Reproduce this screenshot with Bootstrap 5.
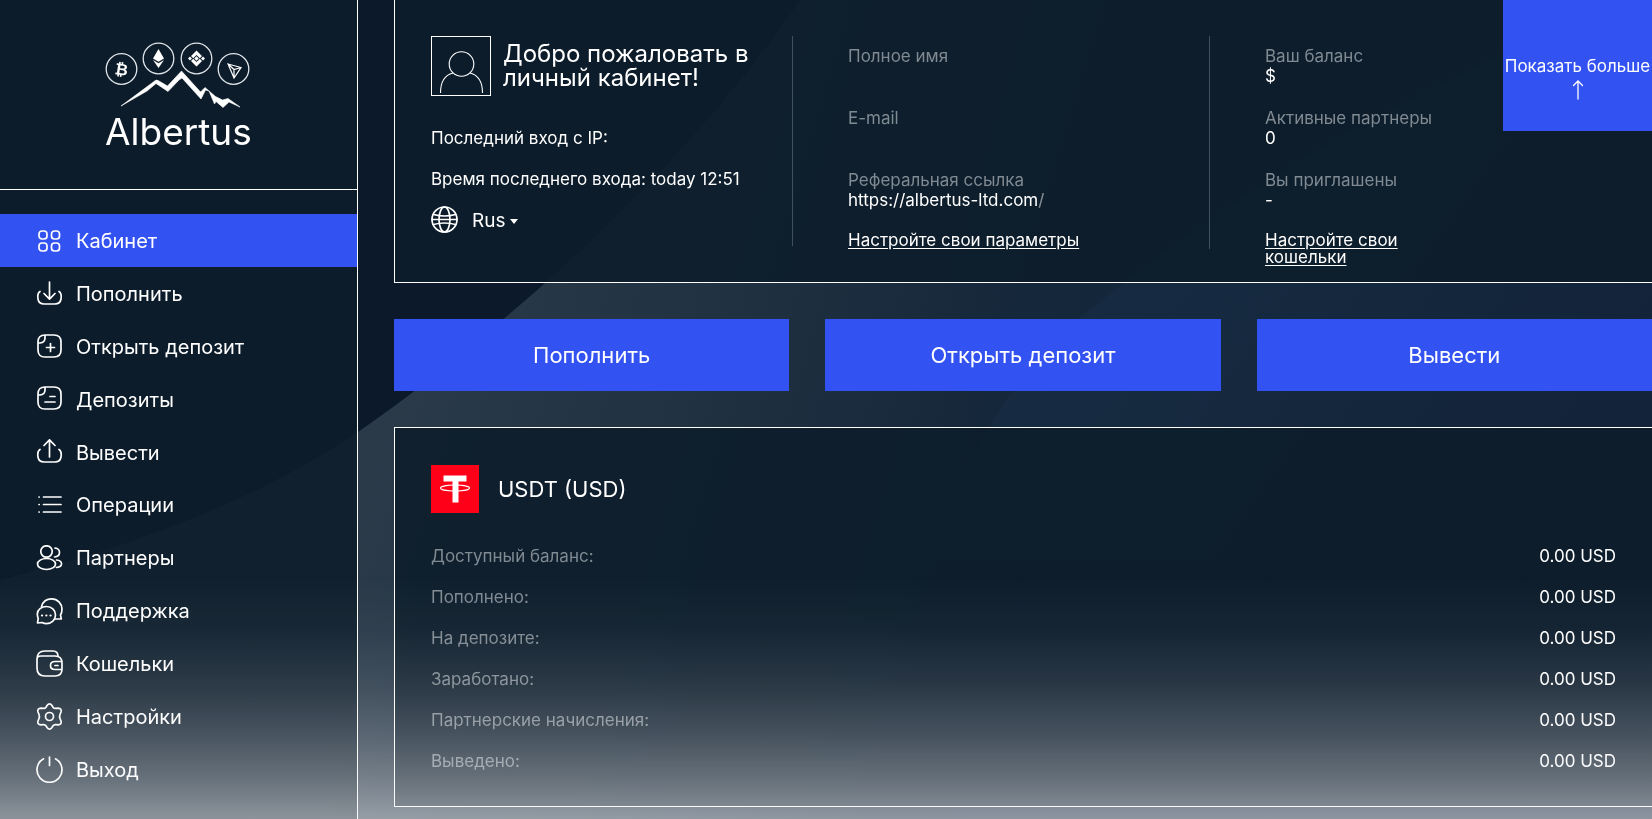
<!DOCTYPE html>
<html lang="ru">
<head>
<meta charset="utf-8">
<meta name="viewport" content="width=device-width, initial-scale=1">
<title>Albertus</title>
<link href="https://cdn.jsdelivr.net/npm/bootstrap@5.3.0/dist/css/bootstrap.min.css" rel="stylesheet">
<style>
:root { --accent: #3352f2; --panel: rgba(12, 29, 42, .88); --soft: #808a92; }
body { font-family: Inter, "Liberation Sans", sans-serif; font-size: 17px; line-height: 20px; color: #fff; background: #0b192b; overflow-x: hidden; }
.backdrop { position: fixed; inset: 0; width: 100%; height: 100%; z-index: -1; }
.fog { position: fixed; inset: 0; z-index: 5; pointer-events: none;
  background: linear-gradient(rgba(245,245,248,0) 70%, rgba(245,245,248,.04) 77%, rgba(245,245,248,.13) 84%, rgba(245,245,248,.25) 90%, rgba(245,245,248,.38) 95%, rgba(245,245,248,.54)); }
.sidebar { width: 358px; background: var(--panel); border-right: 1px solid #fff; }
.brand { height: 190px; border-bottom: 1px solid #fff; }
.side-nav { padding: 24px 0; }
.side-nav .nav-item { flex: 1 1 48px; }
.side-nav .nav-link { height: 100%; padding: 2px 36px 0; gap: 13px; font-size: 20px; color: #fff; border-radius: 0; }
.side-nav .nav-link.active { background: var(--accent); }
.ico { width: 27px; height: 27px; flex: none; fill: none; stroke: #fff; stroke-width: 1.7; stroke-linecap: round; stroke-linejoin: round; }
.content { margin-left: 36px; min-width: 0; }
.panel { background: var(--panel); border: 1px solid #fff; border-right: 0; padding-left: 36px; }
.panel-top { border-top: 0; padding-top: 36px; padding-bottom: 16px; margin-bottom: 36px; display: grid; grid-template-columns: 362fr 417fr 442fr; align-items: start; }
.profile, .details { min-height: 210px; border-right: 1px solid #42505b; }
.avatar { width: 60px; height: 60px; border: 1px solid #fff; flex: none; }
.welcome { font-size: 24px; line-height: 24px; margin: 0; font-weight: 400; }
.profile p { margin: 0 0 21px; }
.profile .head { gap: 12px; margin-bottom: 32px; }
.lang { gap: 14px; margin-top: -4px; }
.lang select { appearance: none; border: 0; color: #fff; font-size: 19px; padding: 2px 12px 0 0; background: url("data:image/svg+xml,%3Csvg xmlns='http://www.w3.org/2000/svg' width='8' height='5'%3E%3Cpath d='M0 0h8L4 5z' fill='white'/%3E%3C/svg%3E") no-repeat right 60%; }
.lang select option { color: #000; }
.details, .balance { padding: 10px 0 0 55px; }
.balance { max-width: 240px; }
.details dl, .balance dl { margin: 0; }
.details dt, .balance dt, .sums th { color: var(--soft); font-weight: 400; }
.details dd, .balance dd { margin: 0 0 22px; min-height: 20px; }
.panel a { color: #fff; line-height: 17px; display: block; text-underline-offset: 2px; }
.more { position: absolute; top: 0; right: 0; width: 149px; height: 131px; padding: 24px 0 0; background: var(--accent); color: #fff; border: 0; font-size: 17px; line-height: 20px; }
.actions { display: grid; grid-template-columns: repeat(3, minmax(0, 1fr)); gap: 36px; margin-bottom: 36px; }
.actions .btn { height: 72px; border: 0; border-radius: 0; background: var(--accent); color: #fff; font-size: 22px; }
.wallet { padding-top: 37px; padding-bottom: 25px; margin-bottom: 12px; }
.wallet .head { gap: 19px; margin-bottom: 22px; font-size: 22px; }
.sums { width: 100%; }
.sums tr { height: 41px; }
.sums th { padding: 0; }
.sums td { text-align: right; padding: 0 36px 0 0; }
</style>
</head>
<body>
<svg class="backdrop" viewBox="0 0 1652 819" preserveAspectRatio="none" aria-hidden="true">
  <defs>
    <linearGradient id="wave" gradientUnits="userSpaceOnUse" x1="420" y1="300" x2="1150" y2="520">
      <stop offset="0" stop-color="#2a3a49"/><stop offset=".35" stop-color="#213242"/><stop offset=".75" stop-color="#15273a"/><stop offset="1" stop-color="#14263c"/>
    </linearGradient>
    <linearGradient id="glow" gradientUnits="userSpaceOnUse" x1="1100" y1="280" x2="1500" y2="560">
      <stop offset="0" stop-color="#172e45"/><stop offset="1" stop-color="#122238"/>
    </linearGradient>
  </defs>
  <path fill="url(#wave)" d="M800 0C740 90 640 200 545 283C490 332 420 390 358 432C250 505 120 550 0 580V819H1652V0Z"/>
  <path fill="url(#glow)" d="M1652 0C1450 60 1250 180 1080 318C1030 360 960 450 930 560H1652Z" opacity=".6"/>
</svg>

<svg class="d-none" aria-hidden="true">
  <symbol id="i-grid" viewBox="0 0 27 27"><rect x="3" y="3" width="8" height="8" rx="3"/><rect x="15.500" y="3" width="8" height="8" rx="3"/><rect x="3" y="15" width="8" height="8" rx="3"/><rect x="15.500" y="15" width="8" height="8" rx="3"/></symbol>
  <symbol id="i-down" viewBox="0 0 27 27"><path d="M13.500 1v17M8 12.500l5.500 5.700 5.500-5.700M4 10.500c-2.500 1.500-2.500 4.500-2 7.500.6 3.800 2.300 5 6 5h11c3.700 0 5.400-1.200 6-5 .5-3 .5-6-2-7.500"/></symbol>
  <symbol id="i-up" viewBox="0 0 27 27"><path d="M13.500 18V1M8 6.500L13.500.800 19 6.500M4 10.500c-2.500 1.500-2.500 4.500-2 7.500.6 3.800 2.300 5 6 5h11c3.700 0 5.400-1.200 6-5 .5-3 .5-6-2-7.500"/></symbol>
  <symbol id="i-open" viewBox="0 0 27 27"><path d="M9 1h9q7 0 7 7v8q0 7-7 7H9q-7 0-7-7V8q0-7 7-7ZM2 9h2q5-.5 5-5V1M14.500 9.500v8M10.500 13.500h8"/></symbol>
  <symbol id="i-list-doc" viewBox="0 0 27 27"><path d="M9 1h9q7 0 7 7v8q0 7-7 7H9q-7 0-7-7V8q0-7 7-7ZM2 9h2q5-.5 5-5V1M14 10.500h5M9 16h10"/></symbol>
  <symbol id="i-ops" viewBox="0 0 27 27"><path d="M7.500 5H25M7.500 12.500H25M7.500 20H25M3 5h.2M3 12.500h.2M3 20h.2"/></symbol>
  <symbol id="i-users" viewBox="0 0 27 27"><circle cx="10.500" cy="6.500" r="5.700"/><ellipse cx="10.500" cy="19" rx="9" ry="5.500"/><path d="M19 3q4.500.500 4.500 4.500t-5 4.500M20.500 15q5 .5 5 3.700t-5 3.800"/></symbol>
  <symbol id="i-chat" viewBox="0 0 27 27"><path d="M5.500 8.500C7 3.500 11 .900 15.500.900 22 .900 26 6 26 11c0 3-.8 5-1.500 6l.8 4h-6"/><path d="M10.500 8.500c5 0 9 3.500 9 8.500s-4 8.700-9 8.700c-2 0-3-.4-4.500-1.200l-4.500.5.700-4.500C1.500 18.500 1.300 17.500 1.300 16c0-4.500 4.200-7.500 9.200-7.500Z"/><path stroke-width="2.200" d="M6 17.500h.1M10.300 17.500h.1M14.500 17.500h.1"/></symbol>
  <symbol id="i-wallet" viewBox="0 0 27 27"><path d="M1 9v9q0 8 8 8h10q7 0 7-7v-6q0-7-7-7H5Q1 6 1 9Q1 1 9 1h8q5 0 5 5.500M26 11.500h-7q-4.500 0-4.500 4t4.500 4h7M19 15.500h3"/></symbol>
  <symbol id="i-gear" viewBox="0 0 27 27"><circle cx="13.500" cy="13.500" r="4"/><path d="M11 2.500Q13.500-.800 16 2.500L17 4.200Q18 5.600 20 5.400L22 5.200Q26 5.400 25 9L24 11.500Q23.200 13.500 24 15.500L25 18Q26 21.600 22 21.800L20 21.600Q18 21.400 17 22.800L16 24.500Q13.500 27.800 11 24.500L10 22.800Q9 21.400 7 21.600L5 21.800Q1 21.600 2 18L3 15.500Q3.800 13.500 3 11.500L2 9Q1 5.400 5 5.200L7 5.400Q9 5.600 10 4.200Z"/></symbol>
  <symbol id="i-power" viewBox="0 0 27 27"><path d="M13.500 1v8.500M7.500 2.800A12.500 12.500 0 1 0 19.500 2.800"/></symbol>
  <symbol id="i-globe" viewBox="0 0 27 27"><circle cx="13.500" cy="13.500" r="12.500"/><ellipse cx="13.500" cy="13.500" rx="5.500" ry="12.500"/><path d="M2.500 8.500Q13.500 11.500 24.500 8.500M2.500 18.500Q13.500 15.500 24.500 18.500M1 13.500h25"/></symbol>
</svg>

<div class="d-flex min-vh-100">
  <aside class="sidebar d-flex flex-column flex-shrink-0">
    <div class="brand text-center">
      <svg width="160" height="190" viewBox="99 0 160 190" role="img" aria-label="Albertus">
        <g fill="none" stroke="#dfe5ea" stroke-width="1.300"><circle cx="121.500" cy="69" r="15.300"/><circle cx="158.500" cy="58.500" r="15.300"/><circle cx="196.500" cy="58.500" r="15.300"/><circle cx="233.500" cy="69" r="15.300"/></g>
        <g fill="#fff">
          <text x="121.500" y="75" font-size="16" font-weight="700" text-anchor="middle" font-family="DejaVu Sans, sans-serif" transform="rotate(8 121.500 69)">₿</text>
          <path d="M158.500 49l5.500 9.500-5.500 3.200-5.500-3.200ZM153 60l5.500 3.300 5.500-3.300-5.500 8Z"/>
          <path d="M196.500 50.500l5.500 5.500-2.200 2.200-3.300-3.300-3.300 3.300L191 56ZM196.500 66.500l5.500-5.500-2.200-2.200-3.300 3.300-3.300-3.300L191 61ZM196.500 56.200l2.300 2.300-2.300 2.300-2.300-2.300ZM190 56.500l2 2-2 2-2-2ZM203 56.500l2 2-2 2-2-2Z"/>
          <path d="M121 106L154 81.500Q156.500 79 159 81L167.500 86 181.500 71 200.500 92 205 87.500 215.500 96.500 222.500 100 228 98.500 240 107 229 102 223 107.500 216 101.500 214.500 104 209 91 205.500 90 201 99 182 78 179 80 168 91.500 156 83.500 147 91Z" stroke="#fff" stroke-width=".600"/>
        </g>
        <path d="M228 64l13 3.500-7 10.500ZM228 64l6 5.500 7-2M234 69.500V78" fill="none" stroke="#fff" stroke-width="1.200"/>
        <text x="105" y="145" font-size="37" fill="#fff">Albertus</text>
      </svg>
    </div>
    <ul class="side-nav nav flex-column flex-nowrap flex-grow-1">
      <li class="nav-item"><a class="nav-link active d-flex align-items-center" href="#"><svg class="ico"><use href="#i-grid"/></svg>Кабинет</a></li>
      <li class="nav-item"><a class="nav-link d-flex align-items-center" href="#"><svg class="ico"><use href="#i-down"/></svg>Пополнить</a></li>
      <li class="nav-item"><a class="nav-link d-flex align-items-center" href="#"><svg class="ico"><use href="#i-open"/></svg>Открыть депозит</a></li>
      <li class="nav-item"><a class="nav-link d-flex align-items-center" href="#"><svg class="ico"><use href="#i-list-doc"/></svg>Депозиты</a></li>
      <li class="nav-item"><a class="nav-link d-flex align-items-center" href="#"><svg class="ico"><use href="#i-up"/></svg>Вывести</a></li>
      <li class="nav-item"><a class="nav-link d-flex align-items-center" href="#"><svg class="ico"><use href="#i-ops"/></svg>Операции</a></li>
      <li class="nav-item"><a class="nav-link d-flex align-items-center" href="#"><svg class="ico"><use href="#i-users"/></svg>Партнеры</a></li>
      <li class="nav-item"><a class="nav-link d-flex align-items-center" href="#"><svg class="ico"><use href="#i-chat"/></svg>Поддержка</a></li>
      <li class="nav-item"><a class="nav-link d-flex align-items-center" href="#"><svg class="ico"><use href="#i-wallet"/></svg>Кошельки</a></li>
      <li class="nav-item"><a class="nav-link d-flex align-items-center" href="#"><svg class="ico"><use href="#i-gear"/></svg>Настройки</a></li>
      <li class="nav-item"><a class="nav-link d-flex align-items-center" href="#"><svg class="ico"><use href="#i-power"/></svg>Выход</a></li>
    </ul>
  </aside>

  <main class="content flex-grow-1">
    <section class="panel panel-top position-relative">
      <div class="profile">
        <div class="head d-flex align-items-center">
          <svg class="avatar" viewBox="0 0 58 58" fill="none" stroke="#fff" stroke-width="1.100" aria-hidden="true"><circle cx="29.500" cy="27" r="12.300"/><path d="M8.500 56C8.500 45 13 38 21 36M38 36C46 38 50.500 45 50.500 56"/></svg>
          <h1 class="welcome">Добро пожаловать в личный кабинет!</h1>
        </div>
        <p>Последний вход с IP:</p>
        <p>Время последнего входа: today 12:51</p>
        <div class="lang d-flex align-items-center">
          <svg class="ico" aria-hidden="true"><use href="#i-globe"/></svg>
          <select aria-label="Язык"><option>Rus</option></select>
        </div>
      </div>
      <div class="details">
        <dl>
          <dt>Полное имя</dt><dd></dd>
          <dt>E-mail</dt><dd></dd>
          <dt>Реферальная ссылка</dt><dd>https://albertus-ltd.com<span class="opacity-50">/</span></dd>
        </dl>
        <a href="#">Настройте свои параметры</a>
      </div>
      <div class="balance">
        <dl>
          <dt>Ваш баланс</dt><dd>$</dd>
          <dt>Активные партнеры</dt><dd>0</dd>
          <dt>Вы приглашены</dt><dd>-</dd>
        </dl>
        <a href="#">Настройте свои кошельки</a>
      </div>
      <button class="more" type="button">Показать больше
        <svg class="d-block mx-auto mt-1" width="12" height="20" viewBox="0 0 12 20" fill="none" stroke="#fff" stroke-width="1.300" stroke-linecap="round" aria-hidden="true"><path d="M6 19V1.500M1.500 5.500L6 1l4.500 4.500"/></svg>
      </button>
    </section>

    <div class="actions">
      <button class="btn" type="button">Пополнить</button>
      <button class="btn" type="button">Открыть депозит</button>
      <button class="btn" type="button">Вывести</button>
    </div>

    <section class="panel wallet">
      <div class="head d-flex align-items-center">
        <svg width="48" height="48" viewBox="0 0 48 48" aria-hidden="true"><path fill="#ff0019" d="M0 0h48v48H0z"/><path fill="#fff" d="M12.500 10.500h23v6h-8v21h-6v-21h-9Z"/><ellipse cx="24" cy="23" rx="14.500" ry="3" fill="none" stroke="#fff" stroke-width="1.100"/></svg>
        <span>USDT (USD)</span>
      </div>
      <table class="sums">
        <tbody>
          <tr><th scope="row">Доступный баланс:</th><td>0.00 USD</td></tr>
          <tr><th scope="row">Пополнено:</th><td>0.00 USD</td></tr>
          <tr><th scope="row">На депозите:</th><td>0.00 USD</td></tr>
          <tr><th scope="row">Заработано:</th><td>0.00 USD</td></tr>
          <tr><th scope="row">Партнерские начисления:</th><td>0.00 USD</td></tr>
          <tr><th scope="row">Выведено:</th><td>0.00 USD</td></tr>
        </tbody>
      </table>
    </section>
  </main>
</div>
<div class="fog" aria-hidden="true"></div>
<script src="https://cdn.jsdelivr.net/npm/bootstrap@5.3.0/dist/js/bootstrap.bundle.min.js"></script>
</body>
</html>
